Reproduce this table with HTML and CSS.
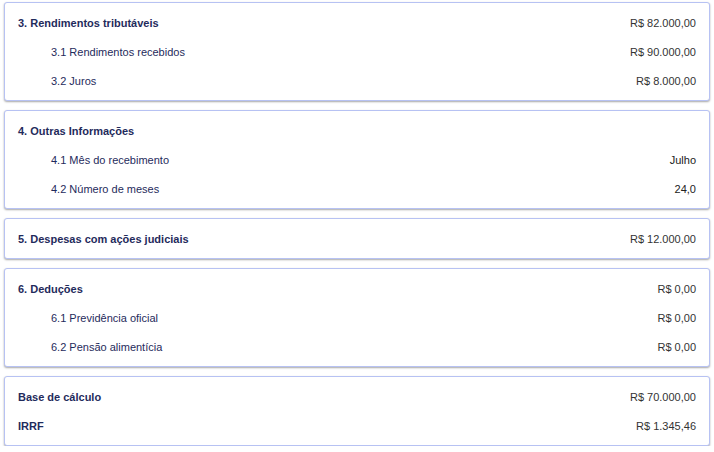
FILE: index.html
```html
<!DOCTYPE html>
<html lang="pt-BR">
<head>
<meta charset="UTF-8" />
<meta name="viewport" content="width=device-width, initial-scale=1.0" />
<title>Resumo IRRF</title>
<link rel="stylesheet" href="styles.css">
</head>
<body>
  <main class="summary">
    <!-- 3. rendimentos -->
    <section class="card">
      <div class="row head"><span>3. Rendimentos tributáveis</span><span class="val">R$ 82.000,00</span></div>
      <div class="row sub"><span>3.1 Rendimentos recebidos</span><span class="val">R$ 90.000,00</span></div>
      <div class="row sub"><span>3.2 Juros</span><span class="val">R$ 8.000,00</span></div>
    </section>

    <!-- 4. outras informacoes -->
    <section class="card">
      <div class="row head"><span>4. Outras Informações</span></div>
      <div class="row sub"><span>4.1 Mês do recebimento</span><span class="val dark">Julho</span></div>
      <div class="row sub"><span>4.2 Número de meses</span><span class="val dark">24,0</span></div>
    </section>

    <section class="card">
      <div class="row head"><span>5. Despesas com ações judiciais</span><span class="val">R$ 12.000,00</span></div>
    </section>

    <section class="card">
      <div class="row head"><span>6. Deduções</span><span class="val">R$ 0,00</span></div>
      <div class="row sub"><span>6.1 Previdência oficial</span><span class="val">R$ 0,00</span></div>
      <div class="row sub"><span>6.2 Pensão alimentícia</span><span class="val">R$ 0,00</span></div>
    </section>

    <!-- totals -->
    <section class="card">
      <div class="row head"><span>Base de cálculo</span><span class="val">R$ 70.000,00</span></div>
      <div class="row head"><span>IRRF</span><span class="val">R$ 1.345,46</span></div>
    </section>
  </main>
</body>
</html>
```

FILE: styles.css
```css
:root {
  --navy: #1f2b5c;
  --text: #333333;
  --line: #b7c2f3;
}
* { box-sizing: border-box; margin: 0; padding: 0; }
body { background: #ffffff; font-family: 'Liberation Sans', Arial, sans-serif; font-size: 11px; color: var(--text); }
.summary { display: flex; flex-direction: column; gap: 9px; padding: 2px 4px 0 4px; }
.card { background: #ffffff; border: 1px solid var(--line); border-radius: 3px; padding: 5px 13px; box-shadow: 0 1px 2px rgba(0,0,0,0.35); }
.row { display: flex; justify-content: space-between; align-items: center; height: 29px; color: var(--navy); }
.row.head { font-weight: 700; }
.row.sub { padding-left: 33px; }
.val { color: var(--text); font-weight: 400; }
.val.dark { color: #222222; }
```
